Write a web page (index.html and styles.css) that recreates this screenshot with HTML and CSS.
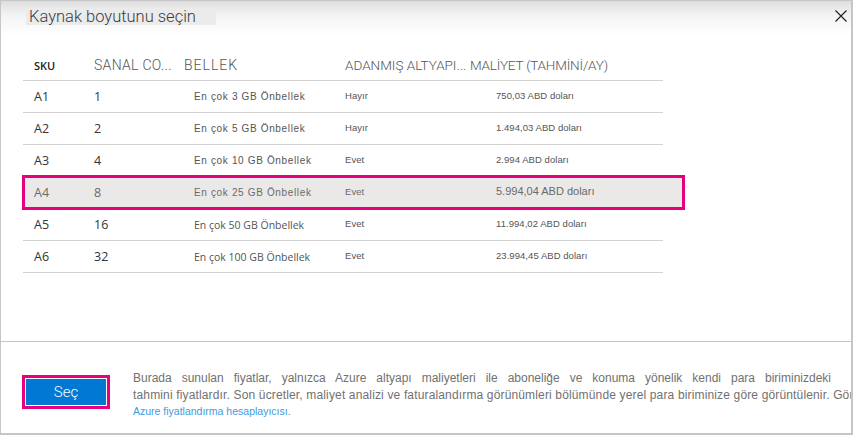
FILE: index.html
```html
<!DOCTYPE html>
<html lang="tr">
<head>
<meta charset="utf-8">
<title>Kaynak boyutunu seçin</title>
<link rel="stylesheet" href="styles.css">
</head>
<body>
<div class="dialog">
  <div class="titlebar">
    <span class="title">Kaynak boyutunu seçin</span>
    <button class="close" aria-label="Kapat">
      <svg width="12" height="12" viewBox="0 0 12 12"><path d="M0.5 0.5 L11.5 11.5 M11.5 0.5 L0.5 11.5" stroke="#222" stroke-width="1.2" fill="none"/></svg>
    </button>
  </div>
  <div class="content">
    <div class="table">
      <div class="row head">
        <div class="c sku">SKU</div>
        <div class="c span2 light"><span class="h1">SANAL CO...</span><span class="h2">BELLEK</span></div>
        <div class="c span2 light"><span class="h3">ADANMIŞ ALTYAPI...</span><span class="h4">MALİYET (TAHMİNİ/AY)</span></div>
      </div>
      <div class="row">
        <div class="c main">A1</div><div class="c main">1</div>
        <div class="c small mem">En çok 3 GB Önbellek</div>
        <div class="c tiny">Hayır</div><div class="c tiny">750,03 ABD doları</div>
      </div>
      <div class="row">
        <div class="c main">A2</div><div class="c main">2</div>
        <div class="c small mem">En çok 5 GB Önbellek</div>
        <div class="c tiny">Hayır</div><div class="c tiny">1.494,03 ABD doları</div>
      </div>
      <div class="row">
        <div class="c main">A3</div><div class="c main">4</div>
        <div class="c small mem">En çok 10 GB Önbellek</div>
        <div class="c tiny">Evet</div><div class="c tiny">2.994 ABD doları</div>
      </div>
      <div class="row selected">
        <div class="c main">A4</div><div class="c main">8</div>
        <div class="c small mem">En çok 25 GB Önbellek</div>
        <div class="c tiny">Evet</div><div class="c cost">5.994,04 ABD doları</div>
      </div>
      <div class="row">
        <div class="c main">A5</div><div class="c main">16</div>
        <div class="c large mem">En çok 50 GB Önbellek</div>
        <div class="c tiny">Evet</div><div class="c tiny">11.994,02 ABD doları</div>
      </div>
      <div class="row">
        <div class="c main">A6</div><div class="c main">32</div>
        <div class="c large mem">En çok 100 GB Önbellek</div>
        <div class="c tiny">Evet</div><div class="c tiny">23.994,45 ABD doları</div>
      </div>
    </div>
  </div>
  <div class="footer">
    <div class="mark"><button class="select">Seç</button></div>
    <div class="note">
      <div class="line1">Burada sunulan fiyatlar, yalnızca Azure altyapı maliyetleri ile aboneliğe ve konuma yönelik kendi para biriminizdeki</div>
      <div class="line2">tahmini fiyatlardır. Son ücretler, maliyet analizi ve faturalandırma görünümleri bölümünde yerel para biriminize göre görüntülenir. Görüntülenen fiyatlar</div>
      <a class="link" href="#">Azure fiyatlandırma hesaplayıcısı.</a>
    </div>
  </div>
</div>
</body>
</html>
```
FILE: styles.css
```css
* { box-sizing: border-box; }
html, body { margin: 0; padding: 0; background: #fff; }
body { font-family: "Segoe UI", "Liberation Sans", Arial, sans-serif; }

.dialog {
  width: 853px;
  height: 435px;
  border: 1px solid #c6c6c6;
  border-right-width: 2px;
  border-bottom-width: 2px;
  display: flex;
  flex-direction: column;
  overflow: hidden;
  background: #fff;
}

.titlebar {
  height: 40px;
  flex: none;
  display: flex;
  align-items: flex-start;
  justify-content: space-between;
  padding: 7px 4px 0 25px;
  background: linear-gradient(#dedede 0%, #f3f3f3 35%, #ffffff 85%);
}
.title {
  background: #ebebeb;
  font-family: Roboto, "Liberation Sans", sans-serif;
  font-weight: 300;
  font-size: 16.5px;
  line-height: 17px;
  color: #3c3c3c;
  padding: 0 20px 0 3px;
}
.close {
  border: 0;
  background: transparent;
  padding: 0;
  margin: 2px 0 0 0;
  width: 12px;
  height: 12px;
  display: flex;
}

.content {
  flex: 1;
  padding: 9px 0 0 22px;
  border-bottom: 1px solid #c6c6c6;
}

.table { width: 640px; }
.row {
  display: grid;
  grid-template-columns: 60px 100px 151px 151px 1fr;
  align-items: center;
  height: 32px;
  padding-left: 11px;
  border-bottom: 1px solid #d2d2d2;
  position: relative;
  z-index: 0;
}
.row.head { height: 31px; }
.c { white-space: nowrap; }
.span2 { grid-column: span 2; }
.sku {
  font-family: "Open Sans", sans-serif;
  font-weight: 600;
  font-size: 11px;
  color: #222;
}
.light {
  font-family: Roboto, "Liberation Sans", sans-serif;
  font-weight: 300;
  font-size: 14px;
  color: #555;
}
.h1 { display: inline-block; width: 90px; letter-spacing: 0.3px; }
.h2 { letter-spacing: 1px; }
.h3 { display: inline-block; width: 125px; font-size: 13.5px; }
.h4 { font-size: 13.5px; letter-spacing: -0.2px; }
.main {
  font-family: "Open Sans", sans-serif;
  font-size: 12.5px;
  color: #333;
}
.mem { color: #555; }
.small {
  font-family: "Liberation Sans", sans-serif;
  font-size: 10px;
  letter-spacing: 0.65px;
}
.large {
  font-family: "Open Sans", sans-serif;
  font-size: 10.5px;
}
.tiny {
  font-family: "Liberation Sans", sans-serif;
  font-size: 9.5px;
  letter-spacing: 0.05px;
  color: #555;
  margin-top: -3px;
}
.cost {
  font-family: "Liberation Sans", sans-serif;
  font-size: 11px;
  color: #6a6a6a;
  margin-top: -3px;
}
.selected .c { color: #6a6a6a; }
.selected::before {
  content: "";
  position: absolute;
  left: -1px;
  top: -2px;
  bottom: -2px;
  right: -22px;
  border: 3px solid #e5007d;
  background: #ebe9e7;
  z-index: -1;
}

.footer {
  height: 91px;
  flex: none;
  display: flex;
  align-items: flex-start;
  padding: 28px 0 0 21px;
  gap: 23px;
}
.mark {
  flex: none;
  margin-top: 5px;
  border: 3px solid #e5007d;
  padding: 1px;
}
.select {
  display: block;
  width: 80px;
  height: 26px;
  border: 0;
  background: #0078d4;
  color: #fff;
  font-family: Roboto, "Liberation Sans", sans-serif;
  font-weight: 300;
  font-size: 15px;
  padding: 0;
}
.note {
  flex: none;
  width: 698px;
  font-family: "Liberation Sans", sans-serif;
  font-size: 12px;
  line-height: 17px;
  color: #717171;
}
.line1 { text-align: justify; text-align-last: justify; white-space: nowrap; }
.line2 { white-space: nowrap; letter-spacing: 0.15px; }
.link {
  display: block;
  font-size: 10.5px;
  line-height: 14px;
  color: #3f9ae0;
  text-decoration: none;
}
```
